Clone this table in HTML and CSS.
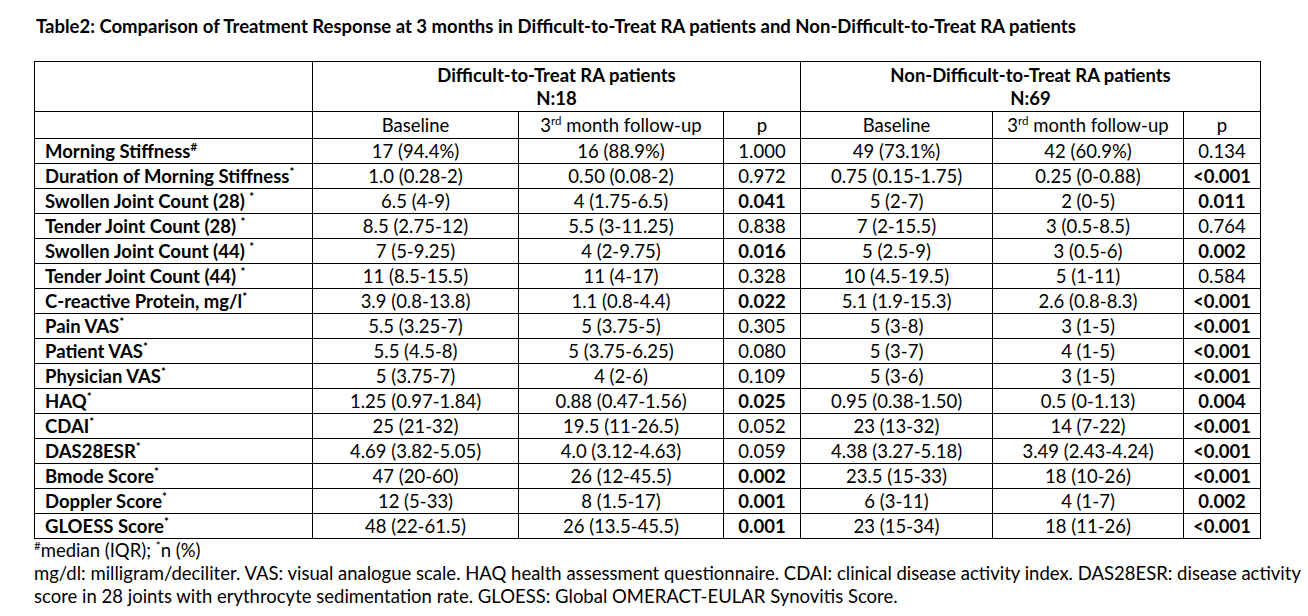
FILE: index.html
```html
<!DOCTYPE html>
<html>
<head>
<meta charset="utf-8">
<link rel="stylesheet" href="styles.css">
</head>
<body>
<div class="page">
  <div class="title">Table2: Comparison of Treatment Response at 3 months in Difficult-to-Treat RA patients and Non-Difficult-to-Treat RA patients</div>
  <table class="tbl">
    <colgroup>
      <col class="c-label">
      <col class="c-base">
      <col class="c-fu">
      <col class="c-p">
      <col class="c-base2">
      <col class="c-fu2">
      <col class="c-p">
    </colgroup>
    <tr class="r-group">
      <td></td>
      <td colspan="3" class="grp">Difficult-to-Treat RA patients<br>N:18</td>
      <td colspan="3" class="grp">Non-Difficult-to-Treat RA patients<br>N:69</td>
    </tr>
    <tr class="r-sub">
      <td></td>
      <td>Baseline</td>
      <td>3<sup>rd</sup> month follow-up</td>
      <td>p</td>
      <td>Baseline</td>
      <td>3<sup>rd</sup> month follow-up</td>
      <td>p</td>
    </tr>
    <tr><td class="lbl">Morning Stiffness<sup>#</sup></td><td>17 (94.4%)</td><td>16 (88.9%)</td><td>1.000</td><td>49 (73.1%)</td><td>42 (60.9%)</td><td>0.134</td></tr>
    <tr><td class="lbl">Duration of Morning Stiffness<sup>*</sup></td><td>1.0 (0.28-2)</td><td>0.50 (0.08-2)</td><td>0.972</td><td>0.75 (0.15-1.75)</td><td>0.25 (0-0.88)</td><td class="b">&lt;0.001</td></tr>
    <tr><td class="lbl">Swollen Joint Count (28) <sup>*</sup></td><td>6.5 (4-9)</td><td>4 (1.75-6.5)</td><td class="b">0.041</td><td>5 (2-7)</td><td>2 (0-5)</td><td class="b">0.011</td></tr>
    <tr><td class="lbl">Tender Joint Count (28) <sup>*</sup></td><td>8.5 (2.75-12)</td><td>5.5 (3-11.25)</td><td>0.838</td><td>7 (2-15.5)</td><td>3 (0.5-8.5)</td><td>0.764</td></tr>
    <tr><td class="lbl">Swollen Joint Count (44) <sup>*</sup></td><td>7 (5-9.25)</td><td>4 (2-9.75)</td><td class="b">0.016</td><td>5 (2.5-9)</td><td>3 (0.5-6)</td><td class="b">0.002</td></tr>
    <tr><td class="lbl">Tender Joint Count (44) <sup>*</sup></td><td>11 (8.5-15.5)</td><td>11 (4-17)</td><td>0.328</td><td>10 (4.5-19.5)</td><td>5 (1-11)</td><td>0.584</td></tr>
    <tr><td class="lbl">C-reactive Protein, mg/l<sup>*</sup></td><td>3.9 (0.8-13.8)</td><td>1.1 (0.8-4.4)</td><td class="b">0.022</td><td>5.1 (1.9-15.3)</td><td>2.6 (0.8-8.3)</td><td class="b">&lt;0.001</td></tr>
    <tr><td class="lbl">Pain VAS<sup>*</sup></td><td>5.5 (3.25-7)</td><td>5 (3.75-5)</td><td>0.305</td><td>5 (3-8)</td><td>3 (1-5)</td><td class="b">&lt;0.001</td></tr>
    <tr><td class="lbl">Patient VAS<sup>*</sup></td><td>5.5 (4.5-8)</td><td>5 (3.75-6.25)</td><td>0.080</td><td>5 (3-7)</td><td>4 (1-5)</td><td class="b">&lt;0.001</td></tr>
    <tr><td class="lbl">Physician VAS<sup>*</sup></td><td>5 (3.75-7)</td><td>4 (2-6)</td><td>0.109</td><td>5 (3-6)</td><td>3 (1-5)</td><td class="b">&lt;0.001</td></tr>
    <tr><td class="lbl">HAQ<sup>*</sup></td><td>1.25 (0.97-1.84)</td><td>0.88 (0.47-1.56)</td><td class="b">0.025</td><td>0.95 (0.38-1.50)</td><td>0.5 (0-1.13)</td><td class="b">0.004</td></tr>
    <tr><td class="lbl">CDAI<sup>*</sup></td><td>25 (21-32)</td><td>19.5 (11-26.5)</td><td>0.052</td><td>23 (13-32)</td><td>14 (7-22)</td><td class="b">&lt;0.001</td></tr>
    <tr><td class="lbl">DAS28ESR<sup>*</sup></td><td>4.69 (3.82-5.05)</td><td>4.0 (3.12-4.63)</td><td>0.059</td><td>4.38 (3.27-5.18)</td><td>3.49 (2.43-4.24)</td><td class="b">&lt;0.001</td></tr>
    <tr><td class="lbl">Bmode Score<sup>*</sup></td><td>47 (20-60)</td><td>26 (12-45.5)</td><td class="b">0.002</td><td>23.5 (15-33)</td><td>18 (10-26)</td><td class="b">&lt;0.001</td></tr>
    <tr><td class="lbl">Doppler Score<sup>*</sup></td><td>12 (5-33)</td><td>8 (1.5-17)</td><td class="b">0.001</td><td>6 (3-11)</td><td>4 (1-7)</td><td class="b">0.002</td></tr>
    <tr><td class="lbl">GLOESS Score<sup>*</sup></td><td>48 (22-61.5)</td><td>26 (13.5-45.5)</td><td class="b">0.001</td><td>23 (15-34)</td><td>18 (11-26)</td><td class="b">&lt;0.001</td></tr>
  </table>
  <div class="notes">
    <div class="note"><sup>#</sup>median (IQR); <sup>*</sup>n (%)</div>
    <div class="note">mg/dl: milligram/deciliter. VAS: visual analogue scale. HAQ health assessment questionnaire. CDAI: clinical disease activity index. DAS28ESR: disease activity</div>
    <div class="note">score in 28 joints with erythrocyte sedimentation rate. GLOESS: Global OMERACT-EULAR Synovitis Score.</div>
  </div>
</div>
</body>
</html>
```

FILE: styles.css
```css
html, body {
  margin: 0;
  padding: 0;
  background: #ffffff;
}

body {
  font-family: Lato, "Open Sans", "Liberation Sans", sans-serif;
  font-size: 18.5px;
  color: #000000;
}

.page {
  padding: 16px 0 0 34px;
}

.title {
  font-weight: 700;
  line-height: 20px;
  padding-left: 2px;
  margin-bottom: 25px;
  white-space: nowrap;
}

.tbl {
  border-collapse: collapse;
  table-layout: fixed;
  width: 1227px;
}

.c-label { width: 278px; }
.c-base { width: 206px; }
.c-fu { width: 205px; }
.c-p { width: 77px; }
.c-base2 { width: 192px; }
.c-fu2 { width: 191px; }

.tbl td {
  border: 1px solid #000000;
  padding: 0;
  text-align: center;
  vertical-align: middle;
  height: 24px;
  line-height: 22px;
  white-space: nowrap;
}

.tbl sup {
  font-size: 11.5px;
  line-height: 0;
  vertical-align: 7px;
}

.tbl .r-group td {
  height: 47px;
  vertical-align: top;
  padding-top: 2px;
  line-height: 22.5px;
}

.tbl .grp {
  font-weight: 700;
}

.tbl .r-sub td {
  height: 26px;
}

.tbl td.lbl {
  text-align: left;
  padding-left: 10px;
  font-weight: 700;
}

.tbl td.b {
  font-weight: 700;
}

.notes {
  line-height: 23px;
}

.note {
  white-space: nowrap;
}

.note sup {
  font-size: 11.5px;
  line-height: 0;
  vertical-align: 7px;
}
```
